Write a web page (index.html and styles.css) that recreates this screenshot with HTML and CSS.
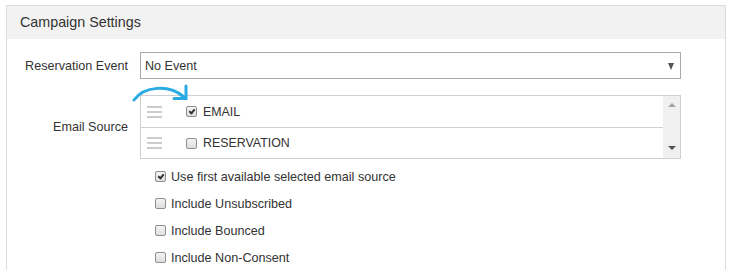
FILE: index.html
```html
<!DOCTYPE html>
<html>
<head>
<meta charset="utf-8">
<link rel="stylesheet" href="styles.css">
</head>
<body>
<div class="panel">
  <div class="panel-head">Campaign Settings</div>
  <div class="panel-body">
    <div class="row row-select">
      <div class="label">Reservation Event</div>
      <div class="select">
        <span>No Event</span>
        <span class="caret"></span>
      </div>
    </div>
    <div class="row row-list">
      <div class="label">Email Source</div>
      <div class="listbox">
        <svg class="hint-arrow" width="60" height="24" viewBox="0 0 60 24">
          <path d="M3 18 C 13 4, 38 2, 53 15" fill="none" stroke="#29abe2" stroke-width="3" stroke-linecap="round"/>
          <path d="M55 4 L55 16.5 L43 16.5" fill="none" stroke="#29abe2" stroke-width="3" stroke-linecap="round" stroke-linejoin="miter"/>
        </svg>
        <div class="items">
          <div class="item">
            <span class="handle"><i></i><i></i><i></i></span>
            <span class="cb checked"></span>
            <span class="item-text">EMAIL</span>
          </div>
          <div class="item">
            <span class="handle"><i></i><i></i><i></i></span>
            <span class="cb"></span>
            <span class="item-text">RESERVATION</span>
          </div>
        </div>
        <div class="scrollbar">
          <span class="sb-up"></span>
          <span class="sb-down"></span>
        </div>
      </div>
    </div>
    <div class="options">
      <div class="opt"><span class="cb checked"></span>Use first available selected email source</div>
      <div class="opt"><span class="cb"></span>Include Unsubscribed</div>
      <div class="opt"><span class="cb"></span>Include Bounced</div>
      <div class="opt"><span class="cb"></span>Include Non-Consent</div>
    </div>
  </div>
</div>
</body>
</html>
```

FILE: styles.css
```css
html, body {
  margin: 0;
  padding: 0;
  background: #fff;
}
body {
  font-family: "Liberation Sans", Arial, sans-serif;
  font-size: 12.6px;
  color: #333;
  overflow: hidden;
}
.panel {
  margin: 5px 0 0 6px;
  width: 718px;
  border: 1px solid #dcdcdc;
  border-bottom: none;
  height: 264px;
  overflow: hidden;
}
.panel-head {
  height: 33px;
  background: #f2f2f2;
  font-size: 14.3px;
  line-height: 32px;
  padding-left: 13px;
  color: #333;
}
.panel-body {
  padding-top: 13px;
}
.row {
  display: flex;
  align-items: center;
}
.label {
  width: 121px;
  text-align: right;
  padding-right: 12px;
  flex: none;
}
.select {
  width: 535px;
  height: 25px;
  border: 1px solid #a9a9a9;
  display: flex;
  align-items: center;
  justify-content: space-between;
  padding-left: 4px;
  box-sizing: content-box;
}
.select span:first-child {
  margin-top: 1px;
}
.caret {
  width: 0;
  height: 0;
  border-left: 3.5px solid transparent;
  border-right: 3.5px solid transparent;
  border-top: 7px solid #555;
  margin-right: 6px;
  margin-top: 2px;
}
.row-list {
  margin-top: 16px;
}
.listbox {
  position: relative;
  width: 539px;
  height: 62px;
  border: 1px solid #cfcfcf;
  display: flex;
}
.hint-arrow {
  position: absolute;
  left: -10px;
  top: -14px;
}
.items {
  flex: 1;
}
.item {
  height: 31px;
  display: flex;
  align-items: center;
  border-bottom: 1px solid #cfcfcf;
  font-size: 12.4px;
}
.item:last-child {
  border-bottom: none;
  height: 30px;
}
.handle {
  display: flex;
  flex-direction: column;
  gap: 3px;
  width: 15px;
  margin-left: 6px;
  margin-right: 24px;
}
.handle i {
  display: block;
  height: 2px;
  background: #cccccc;
}
.cb {
  display: inline-block;
  width: 9px;
  height: 9px;
  border: 1px solid #8e8e8e;
  border-radius: 2px;
  background: linear-gradient(#f4f4f4, #dedede);
  position: relative;
  flex: none;
}
.cb.checked::after {
  content: "";
  position: absolute;
  left: 3px;
  top: 1px;
  width: 2px;
  height: 4px;
  border-right: 2px solid #333;
  border-bottom: 2px solid #333;
  transform: rotate(40deg);
}
.item .cb {
  margin-right: 6px;
}
.scrollbar {
  width: 17px;
  background: #f0f0f0;
  position: relative;
}
.sb-up {
  position: absolute;
  left: 5px;
  top: 7px;
  width: 0;
  height: 0;
  border-left: 4px solid transparent;
  border-right: 4px solid transparent;
  border-bottom: 4px solid #a3a3a3;
}
.sb-down {
  position: absolute;
  left: 5px;
  bottom: 8px;
  width: 0;
  height: 0;
  border-left: 4px solid transparent;
  border-right: 4px solid transparent;
  border-top: 4px solid #505050;
}
.options {
  margin-top: 4px;
  padding-left: 148px;
}
.opt {
  height: 27px;
  display: flex;
  align-items: center;
}
.opt .cb {
  margin-right: 5px;
}
```
